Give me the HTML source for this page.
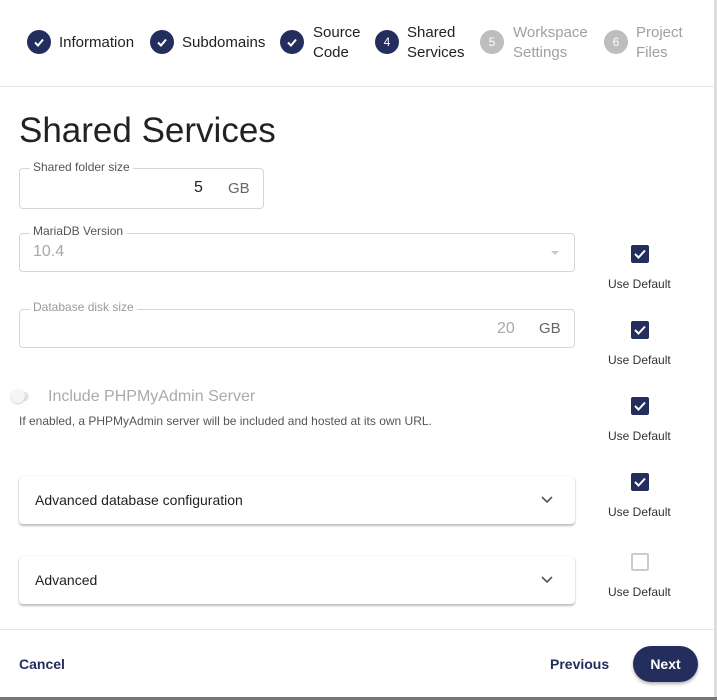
<!DOCTYPE html>
<html><head><style>
*{margin:0;padding:0;box-sizing:border-box}
body{width:717px;height:700px;background:#fff;font-family:"Liberation Sans",sans-serif;position:relative;overflow:hidden;color:#222}
.a{position:absolute}
.c{position:absolute;width:24px;height:24px;border-radius:50%;background:#242e5c;color:#fff;font-size:12px;display:flex;align-items:center;justify-content:center}
.c.g{background:#bdbdbd}
.st{position:absolute;font-size:15px;line-height:20px;color:#222}
.st.g{color:#a0a0a0}
.fs{position:absolute;border:1px solid #d6d6d6;border-radius:4px}
.lg{position:absolute;font-size:12px;background:#fff;padding:0 3px;color:#555}
.cb{position:absolute;width:18px;height:18px;border-radius:2px;background:#242e5c}
.ud{position:absolute;font-size:12px;color:#333}
.card{position:absolute;left:19px;width:556px;height:48px;border-radius:4px;box-shadow:0 2px 2px rgba(0,0,0,.25),0 0 1px rgba(0,0,0,.15);font-size:14px;color:#222;padding-left:16px;line-height:48px}
</style></head><body>
<div class="c" style="left:27px;top:30px"><svg width="14" height="14" viewBox="0 0 14 14"><path d="M3 7.5l3 3 5-6" stroke="#fff" stroke-width="2" fill="none"/></svg></div>
<div class="st" style="left:59px;top:33px">Information</div>
<div class="c" style="left:150px;top:30px"><svg width="14" height="14" viewBox="0 0 14 14"><path d="M3 7.5l3 3 5-6" stroke="#fff" stroke-width="2" fill="none"/></svg></div>
<div class="st" style="left:182px;top:33px">Subdomains</div>
<div class="c" style="left:280px;top:30px"><svg width="14" height="14" viewBox="0 0 14 14"><path d="M3 7.5l3 3 5-6" stroke="#fff" stroke-width="2" fill="none"/></svg></div>
<div class="st" style="left:313px;top:23px">Source<br>Code</div>
<div class="c" style="left:375px;top:30px">4</div>
<div class="st" style="left:407px;top:23px">Shared<br>Services</div>
<div class="c g" style="left:480px;top:30px">5</div>
<div class="st g" style="left:513px;top:23px">Workspace<br>Settings</div>
<div class="c g" style="left:604px;top:30px">6</div>
<div class="st g" style="left:636px;top:23px">Project<br>Files</div>
<div class="a" style="left:0;top:86px;width:717px;height:1px;background:#e6e6e6"></div>
<div class="a" style="left:19px;top:111px;font-size:35px;color:#222">Shared Services</div>

<div class="fs" style="left:19px;top:168px;width:245px;height:41px"></div>
<div class="lg" style="left:30px;top:160px">Shared folder size</div>
<div class="a" style="left:194px;top:179px;font-size:16px">5</div>
<div class="a" style="left:228px;top:180px;font-size:15px;color:#666">GB</div>

<div class="fs" style="left:19px;top:233px;width:556px;height:39px"></div>
<div class="lg" style="left:30px;top:224px">MariaDB Version</div>
<div class="a" style="left:33px;top:243px;font-size:16px;color:#a8a8a8">10.4</div>
<div class="a" style="left:551px;top:251px;border-left:4px solid transparent;border-right:4px solid transparent;border-top:4px solid #c8c8c8"></div>

<div class="fs" style="left:19px;top:309px;width:556px;height:39px"></div>
<div class="lg" style="left:30px;top:300px;color:#999">Database disk size</div>
<div class="a" style="left:497px;top:320px;font-size:16px;color:#aaa">20</div>
<div class="a" style="left:539px;top:320px;font-size:15px;color:#666">GB</div>

<div class="a" style="left:13px;top:392px;width:16px;height:9px;border-radius:5px;background:#e6e6e6"></div>
<div class="a" style="left:11px;top:389px;width:14px;height:14px;border-radius:50%;background:#f5f5f5;box-shadow:0 1px 2px rgba(0,0,0,.2)"></div>
<div class="a" style="left:48px;top:388px;font-size:16px;color:#aaa">Include PHPMyAdmin Server</div>
<div class="a" style="left:19px;top:414px;font-size:12px;color:#555">If enabled, a PHPMyAdmin server will be included and hosted at its own URL.</div>

<div class="card" style="top:476px">Advanced database configuration</div>
<div class="card" style="top:556px">Advanced</div>
<svg class="a" style="left:540px;top:495px" width="14" height="10"><path d="M2 2l5 5 5-5" stroke="#555" stroke-width="1.6" fill="none"/></svg>
<svg class="a" style="left:540px;top:575px" width="14" height="10"><path d="M2 2l5 5 5-5" stroke="#555" stroke-width="1.6" fill="none"/></svg>

<div class="cb" style="left:631px;top:245px"><svg width="18" height="18"><path d="M4 9l3.5 3.5 6.5-7" stroke="#fff" stroke-width="2" fill="none"/></svg></div>
<div class="ud" style="left:608px;top:277px">Use Default</div>
<div class="cb" style="left:631px;top:321px"><svg width="18" height="18"><path d="M4 9l3.5 3.5 6.5-7" stroke="#fff" stroke-width="2" fill="none"/></svg></div>
<div class="ud" style="left:608px;top:353px">Use Default</div>
<div class="cb" style="left:631px;top:397px"><svg width="18" height="18"><path d="M4 9l3.5 3.5 6.5-7" stroke="#fff" stroke-width="2" fill="none"/></svg></div>
<div class="ud" style="left:608px;top:429px">Use Default</div>
<div class="cb" style="left:631px;top:473px"><svg width="18" height="18"><path d="M4 9l3.5 3.5 6.5-7" stroke="#fff" stroke-width="2" fill="none"/></svg></div>
<div class="ud" style="left:608px;top:505px">Use Default</div>
<div class="cb" style="left:631px;top:553px;background:#fff;border:2px solid #ccc"></div>
<div class="ud" style="left:608px;top:585px">Use Default</div>

<div class="a" style="left:0;top:629px;width:717px;height:1px;background:#e6e6e6"></div>
<div class="a" style="left:19px;top:656px;font-size:14px;font-weight:bold;color:#242e5c">Cancel</div>
<div class="a" style="left:550px;top:656px;font-size:14px;font-weight:bold;color:#242e5c">Previous</div>
<div class="a" style="left:633px;top:646px;width:65px;height:36px;border-radius:18px;background:#242e5c;color:#fff;font-size:14px;font-weight:bold;text-align:center;line-height:36px;box-shadow:0 2px 3px rgba(0,0,0,.3)">Next</div>
<div class="a" style="left:714px;top:0;width:3px;height:700px;background:#ddd"></div>
<div class="a" style="left:0;top:697px;width:717px;height:3px;background:#777"></div>
</body></html>
